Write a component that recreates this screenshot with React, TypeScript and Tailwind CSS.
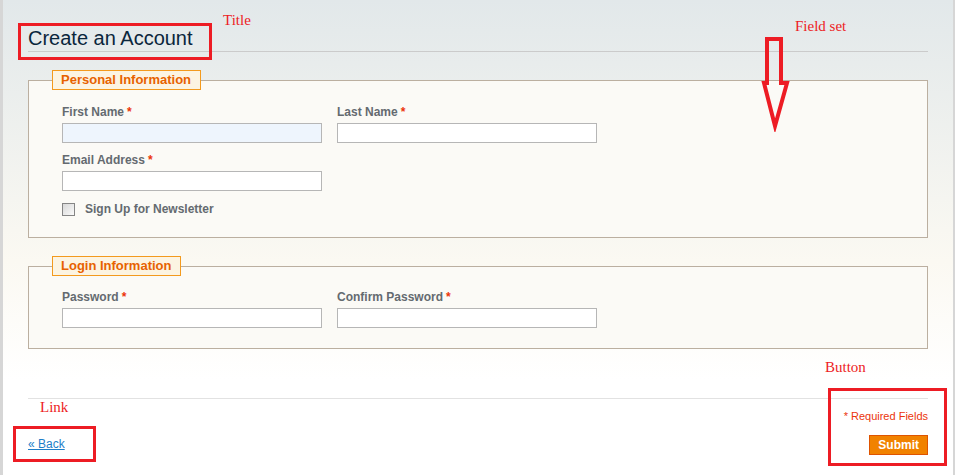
const Req = () => <span className="text-[#eb340a] ml-[3px]">*</span>;

const Field = ({label, focused}: {label: string; focused?: boolean}) => (
    <div className="w-[260px]">
        <div className="text-[12px] leading-[15px] font-bold text-[#646a70]">
            {label}<Req/>
        </div>
        <div className={`mt-[3px] h-[20px] border border-[#b6b6b6] ${focused ? "bg-[#eef5fd]" : "bg-white"}`}/>
    </div>
);

const Legend = ({children}: {children: string}) => (
    <legend className="h-[20px] pl-[8px] pr-[9px] border border-[#f39a1e] bg-[#fcf4e2] text-[13px] leading-[18px] font-bold text-[#e76200]">
        {children}
    </legend>
);

const Note = ({className, children}: {className: string; children: string}) => (
    <div className={`absolute text-[15px] leading-[17px] text-[#ed1c24] font-['Liberation_Serif',serif] ${className}`}>
        {children}
    </div>
);

const App = () => {
    return (
        <div className="relative w-[955px] h-[475px] overflow-hidden border-l-[3px] border-r-[2px] border-[#d6d6d6] bg-linear-to-b from-[#e2e8ea] via-[#fbf9f2] via-55% to-white to-80% font-['Liberation_Sans',Arial,sans-serif]">
            <div className="ml-[25px] w-[900px]">
                {/* title */}
                <div className="pt-[26px]">
                    <h1 className="h-[25px] text-[20px] leading-[24px] text-[#0a263c] border-b border-[#cbcbcb] box-content">
                        Create an Account
                    </h1>
                </div>

                {/* personal */}
                <fieldset className="mt-[18px] pl-[23px] pb-[20px] border border-[#bbafa0] bg-[#fbfaf6]">
                    <Legend>Personal Information</Legend>
                    <div className="pl-[10px] mt-[15px]">
                        <div className="flex gap-[15px]">
                            <Field label="First Name" focused/>
                            <Field label="Last Name"/>
                        </div>
                        <div className="mt-[10px]">
                            <Field label="Email Address"/>
                        </div>
                        <div className="mt-[11px] flex items-center gap-[10px] h-[15px]">
                            <span className="w-[13px] h-[13px] border border-[#858585] bg-linear-to-br from-[#d8d8d8] to-[#fafafa]"/>
                            <span className="text-[12px] leading-[15px] font-bold text-[#646a70]">Sign Up for Newsletter</span>
                        </div>
                    </div>
                </fieldset>

                {/* login */}
                <fieldset className="mt-[18px] pl-[23px] pb-[20px] border border-[#bbafa0] bg-[#fbfaf6]">
                    <Legend>Login Information</Legend>
                    <div className="pl-[10px] mt-[14px] flex gap-[15px]">
                        <Field label="Password"/>
                        <Field label="Confirm Password"/>
                    </div>
                </fieldset>

                {/* buttons */}
                <div className="mt-[49px] h-px bg-[#e2e2e2]"/>
                <div className="mt-[11px] text-right text-[11px] leading-[13px] text-[#eb340a]">* Required Fields</div>
                <div className="mt-[12px] flex justify-between items-start">
                    <a href="#" className="mt-[2px] text-[12px] leading-[15px] text-[#1e7ec8] underline">« Back</a>
                    <button className="h-[20px] px-[8px] border border-[#de5400] bg-[#f18200] text-white text-[12px] leading-[18px] font-bold">
                        Submit
                    </button>
                </div>
            </div>

            {/* annotations */}
            <div className="absolute left-[15px] top-[23px] w-[194px] h-[37px] border-[3px] border-[#ed1c24]"/>
            <Note className="left-[220px] top-[12px]">Title</Note>
            <Note className="left-[792px] top-[18px]">Field set</Note>
            <svg className="absolute left-[755px] top-[32px]" width="36" height="100" viewBox="0 0 36 100">
                <polygon points="9,7 23,7 23,51 29,51 17,94 6,51 9,51" fill="none" stroke="#ed1c24" strokeWidth="4"/>
            </svg>
            <Note className="left-[822px] top-[359px]">Button</Note>
            <div className="absolute left-[825px] top-[388px] w-[119px] h-[78px] border-[3px] border-[#ed1c24]"/>
            <Note className="left-[37px] top-[399px]">Link</Note>
            <div className="absolute left-[10px] top-[426px] w-[83px] h-[36px] border-[3px] border-[#ed1c24]"/>
        </div>
    );
};

export default App;
